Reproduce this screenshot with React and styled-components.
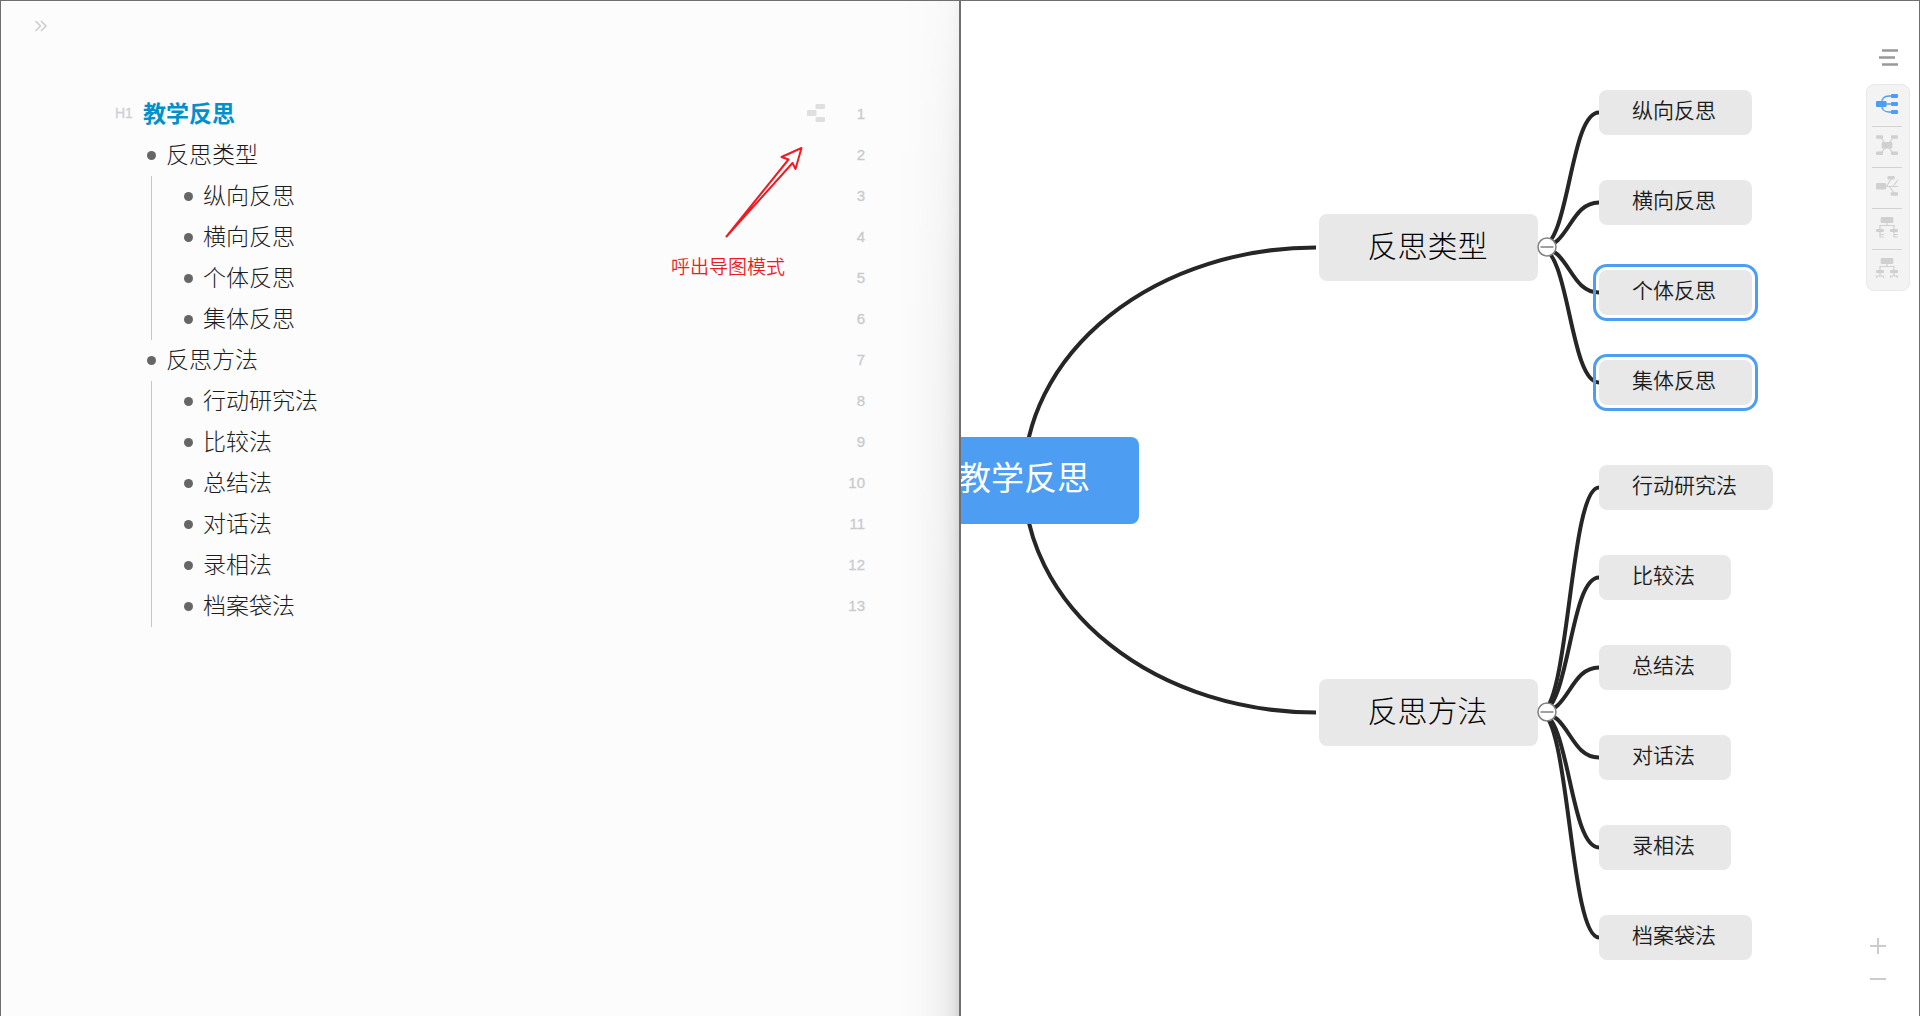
import React from "react";
import styled, { createGlobalStyle, css } from "styled-components";

const GlobalStyle = createGlobalStyle`
  * { box-sizing: border-box; }
  body {
    margin: 0;
    background: #ffffff;
    font-family: "Liberation Sans", "Noto Sans CJK SC", sans-serif;
    color: #333333;
  }
  button { padding: 0; border: 0; background: none; cursor: pointer; font: inherit; }
  svg { display: block; }
`;

const Screen = styled.div`
  display: grid;
  grid-template-columns: 1fr 1fr;
  min-height: 100vh;
`;

const Pane = styled.section`
  position: relative;
  overflow: hidden;
  border: 1px solid #6f6f71;
  border-bottom: 0;
`;

const OutlinePane = styled(Pane)`
  background: #fcfcfc;
`;

const MapPane = styled(Pane)`
  background: #ffffff;
`;

const EdgeShade = styled.div`
  position: absolute;
  top: 0;
  right: 0;
  bottom: 0;
  width: 60px;
  pointer-events: none;
  background: linear-gradient(
    to left,
    rgba(0, 0, 0, 0.15) 0,
    rgba(0, 0, 0, 0.09) 6px,
    rgba(0, 0, 0, 0.05) 14px,
    rgba(0, 0, 0, 0.03) 24px,
    rgba(0, 0, 0, 0.01) 42px,
    rgba(0, 0, 0, 0) 60px
  );
  mask-image: linear-gradient(to bottom, rgba(0, 0, 0, 0.25), rgba(0, 0, 0, 0.75) 300px, #000 620px);
`;

const PaneHeader = styled.header`
  display: flex;
  align-items: center;
  height: 50px;
  padding-left: 33px;
`;

const Outline = styled.ol`
  list-style: none;
  margin: 0;
  padding: 43px 94px 0 114px;
`;

const Row = styled.li`
  display: flex;
  align-items: center;
  height: 41px;
`;

const LevelTag = styled.span`
  flex: none;
  width: 28px;
  padding-bottom: 4px;
  font-size: 14px;
  -webkit-text-stroke: 0.3px #cfcfd6;
  color: #cfcfd6;
`;

const Slot = styled.span`
  display: flex;
  flex: none;
  align-items: center;
  align-self: stretch;
  justify-content: center;
  width: 17px;
`;

const Guide = styled.span`
  align-self: stretch;
  width: 1px;
  background: #c6c6c6;
`;

const GuideSlot = styled(Slot)`
  margin-right: 20px;
`;

const Dot = styled.span`
  width: 9px;
  height: 9px;
  border-radius: 50%;
  background: #666666;
`;

const RowText = styled.span`
  flex: 1;
  font-size: 23px;
  line-height: 41px;
  font-weight: 300;
  padding-left: 6px;
  color: #1c1c1c;
  white-space: nowrap;
`;

const Heading = styled.h1`
  flex: 1;
  margin: 0;
  font-size: 23px;
  line-height: 41px;
  font-weight: 700;
  color: #0090cc;
`;

const MapModeButton = styled.button`
  padding-bottom: 3px;
`;

const LineNumber = styled.span`
  flex: none;
  width: 40px;
  padding-bottom: 2px;
  text-align: right;
  font-size: 15px;
  -webkit-text-stroke: 0.3px #c8cad0;
  color: #c8cad0;
`;

const Annotation = styled.figure`
  position: absolute;
  top: 144px;
  right: 150px;
  display: flex;
  flex-direction: column;
  gap: 15px;
  width: 138px;
  margin: 0;
  svg { align-self: flex-end; }
`;

const Caption = styled.figcaption`
  font-size: 19px;
  line-height: 26px;
  font-weight: 350;
  white-space: nowrap;
  color: #ed1c24;
`;

const Links = styled.svg`
  position: absolute;
  inset: 0;
  width: 100%;
  height: 100%;
  fill: none;
  stroke: #262626;
  stroke-width: 4;
`;

const nodeKinds = {
  root: css`
    width: 230px;
    height: 87px;
    font-size: 33px;
    font-weight: 400;
    color: #ffffff;
    background: #4d9ef3;
    padding-bottom: 10px;
  `,
  branch: css`
    width: 219px;
    height: 67px;
    padding: 0 2px 7px 0;
    font-size: 30px;
    font-weight: 300;
    color: #000000;
  `,
  leaf: css`
    height: 45px;
    padding: 0 36px 7px 33px;
    font-size: 21px;
    font-weight: 350;
    color: #1c1c1c;
  `,
};

const Node = styled.div`
  position: absolute;
  display: flex;
  align-items: center;
  justify-content: center;
  border-radius: 8px;
  background: #e8e8e8;
  white-space: nowrap;
  ${(p) => nodeKinds[p.$kind]}
  ${(p) => p.$selected && css`
    outline: 3px solid #4d9ef3;
    outline-offset: 3px;
  `}
`;

const Toggle = styled.button`
  position: absolute;
  width: 20px;
  height: 20px;
`;

const Tools = styled.aside`
  position: absolute;
  top: 46px;
  right: 9px;
  display: flex;
  flex-direction: column;
  align-items: center;
  gap: 17px;
  width: 44px;
`;

const LayoutBar = styled.div`
  width: 100%;
  padding: 0 7px 0 5px;
  border: 1px solid #e9e9e9;
  border-radius: 8px;
  background: #f3f3f3;
`;

const LayoutButton = styled.button`
  display: flex;
  align-items: center;
  justify-content: center;
  width: 100%;
  height: 41px;
  padding-bottom: 4px;
  color: ${(p) => (p.$active ? "#4d9ef3" : "#d0d0d0")};
  & + & { border-top: 1px solid #d2d2d2; }
`;

const Zoom = styled.div`
  position: absolute;
  right: 32px;
  bottom: 28px;
  display: flex;
  flex-direction: column;
  gap: 15px;
`;

const ZoomButton = styled.button`
  width: 18px;
  height: 18px;
`;

const branches = [
  {
    text: "反思类型",
    top: 213,
    leaves: [
      { text: "纵向反思", top: 89 },
      { text: "横向反思", top: 179 },
      { text: "个体反思", top: 269, selected: true },
      { text: "集体反思", top: 359, selected: true },
    ],
  },
  {
    text: "反思方法",
    top: 678,
    leaves: [
      { text: "行动研究法", top: 464 },
      { text: "比较法", top: 554 },
      { text: "总结法", top: 644 },
      { text: "对话法", top: 734 },
      { text: "录相法", top: 824 },
      { text: "档案袋法", top: 914 },
    ],
  },
];

const rows = branches.flatMap((b) => [
  { text: b.text, level: 1 },
  ...b.leaves.map((l) => ({ text: l.text, level: 2 })),
]);

const ROOT = { left: -52, top: 436, x: 63, y: 479 };
const BRANCH_X = 358;
const LEAF_X = 638;
const TOGGLE_X = 586;

const layouts = [
  {
    name: "逻辑图",
    art: (
      <>
        <path d="M16 4h-2C9.500 4 6.500 6 6.500 12S9.500 20 14 20h2M11 12h5" fill="none" stroke="currentColor" strokeWidth="1.300" />
        <rect x="1" y="9" width="10.500" height="6" rx="1" />
        <rect x="16" y="2" width="7" height="4" rx="1" />
        <rect x="16" y="10" width="7" height="4" rx="1" />
        <rect x="16" y="18" width="7" height="4" rx="1" />
      </>
    ),
  },
  {
    name: "思维导图",
    art: (
      <>
        <path d="M6 5l12 15M18 5L6 20" fill="none" stroke="currentColor" strokeWidth="1.200" />
        <rect x="6.700" y="9" width="10.600" height="6.500" rx="1" />
        <rect x="1" y="2.300" width="7" height="3.500" rx="1" />
        <rect x="16" y="2.300" width="7" height="3.500" rx="1" />
        <rect x="1" y="18.400" width="7" height="3.500" rx="1" />
        <rect x="16" y="18.400" width="7" height="3.500" rx="1" />
      </>
    ),
  },
  {
    name: "鱼骨图",
    art: (
      <>
        <path d="M10 12.500h13M11.500 12.500L16 5M18 12.500L22.800 6M14.500 12.500L19 19" fill="none" stroke="currentColor" strokeWidth="1.200" />
        <rect x="1" y="9" width="10" height="6.500" rx="1" />
        <rect x="12.400" y="2" width="7.300" height="3.500" rx="1" />
        <rect x="15.700" y="18.200" width="7.300" height="3.500" rx="1" />
      </>
    ),
  },
  {
    name: "目录组织图",
    art: (
      <>
        <path d="M12 7v3.500M5 14v-3.500h14V14M5 16v6h4M5 19.500h4M19 16v6h4M19 19.500h4" fill="none" stroke="currentColor" strokeWidth="1.200" />
        <rect x="5.700" y="2" width="12.600" height="6" rx="1" />
        <rect x="1" y="14" width="8" height="3" rx="1" />
        <rect x="15" y="14" width="8" height="3" rx="1" />
      </>
    ),
  },
  {
    name: "组织结构图",
    art: (
      <>
        <path d="M12 7v3.500M5 14v-3.500h14V14M5 16v4M1.600 22v-2h6.800v2M19 16v4M15.600 22v-2h6.800v2" fill="none" stroke="currentColor" strokeWidth="1.200" />
        <rect x="5.700" y="2" width="12.600" height="6" rx="1" />
        <rect x="1" y="14" width="8" height="3" rx="1" />
        <rect x="15" y="14" width="8" height="3" rx="1" />
      </>
    ),
  },
];

function MapModeIcon() {
  return (
    <svg width="18" height="18" fill="#dfdfdf">
      <rect x="0" y="6" width="9.500" height="6" rx="1" />
      <rect x="8.500" y="0" width="9.500" height="5" rx="1" />
      <rect x="8.500" y="13" width="9.500" height="5" rx="1" />
    </svg>
  );
}

function OutlineView() {
  return (
    <OutlinePane>
      <PaneHeader>
        <button type="button" aria-label="展开侧栏">
          <svg width="14" height="12" fill="none" stroke="#cccccc" strokeWidth="1.500">
            <path d="M1.500 1l5 5-5 5M7 1l5 5-5 5" />
          </svg>
        </button>
      </PaneHeader>
      <Outline>
        <Row>
          <LevelTag>H1</LevelTag>
          <Heading>教学反思</Heading>
          <MapModeButton type="button" aria-label="导图模式"><MapModeIcon /></MapModeButton>
          <LineNumber>1</LineNumber>
        </Row>
        {rows.map((row, i) => (
          <Row key={row.text}>
            <LevelTag />
            {row.level === 2 && <GuideSlot><Guide /></GuideSlot>}
            <Slot><Dot /></Slot>
            <RowText>{row.text}</RowText>
            <LineNumber>{i + 2}</LineNumber>
          </Row>
        ))}
      </Outline>
      <Annotation>
        <svg width="84" height="95" fill="none" stroke="#ed1c24" strokeWidth="2" strokeLinejoin="round">
          <path d="M1.500 91.500L63.500 14.500 56.500 12 76.500 3 70.500 24 67.500 18Z" />
        </svg>
        <Caption>呼出导图模式</Caption>
      </Annotation>
      <EdgeShade />
    </OutlinePane>
  );
}

function BranchLinks({ branch }) {
  const y = branch.top + 33.5;
  const x = TOGGLE_X - 7;
  const mid = (x + LEAF_X) / 2;
  return (
    <>
      <path d={`M${ROOT.x} ${ROOT.y}A292 ${Math.abs(ROOT.y - y)} 0 0 ${y < ROOT.y ? 1 : 0} 355 ${y}`} />
      {branch.leaves.map((leaf) => {
        const end = leaf.top + 22.5;
        return <path key={leaf.text} d={`M${x} ${y}C${mid} ${y} ${mid} ${end} ${LEAF_X} ${end}`} />;
      })}
    </>
  );
}

function MindMap() {
  return (
    <MapPane>
      <Links>
        {branches.map((b) => <BranchLinks key={b.text} branch={b} />)}
      </Links>
      <Node $kind="root" style={{ left: ROOT.left, top: ROOT.top }}>教学反思</Node>
      {branches.map((b) => (
        <React.Fragment key={b.text}>
          <Node $kind="branch" style={{ left: BRANCH_X, top: b.top }}>{b.text}</Node>
          <Toggle type="button" aria-label={`收起${b.text}`} style={{ left: TOGGLE_X - 10, top: b.top + 23 }}>
            <svg width="20" height="20" stroke="#808080" fill="#ffffff">
              <circle cx="10" cy="10" r="9" strokeWidth="1.500" />
              <path d="M3.500 10h13" strokeWidth="1.500" />
            </svg>
          </Toggle>
          {b.leaves.map((l) => (
            <Node key={l.text} $kind="leaf" $selected={l.selected} style={{ left: LEAF_X, top: l.top }}>
              {l.text}
            </Node>
          ))}
        </React.Fragment>
      ))}
      <Tools>
        <button type="button" aria-label="菜单">
          <svg width="20" height="20" stroke="#999999" strokeWidth="2.500">
            <path d="M4 3.500h16M1 10.500h16M4 17.500h16" />
          </svg>
        </button>
        <LayoutBar>
          {layouts.map((l, i) => (
            <LayoutButton key={l.name} type="button" aria-label={l.name} aria-pressed={i === 0} $active={i === 0}>
              <svg width="24" height="24" fill="currentColor">{l.art}</svg>
            </LayoutButton>
          ))}
        </LayoutBar>
      </Tools>
      <Zoom>
        <ZoomButton type="button" aria-label="放大">
          <svg width="18" height="18" stroke="#cccccc" strokeWidth="2"><path d="M1 9h16M9 1v16" /></svg>
        </ZoomButton>
        <ZoomButton type="button" aria-label="缩小">
          <svg width="18" height="18" stroke="#cccccc" strokeWidth="2"><path d="M1 9h16" /></svg>
        </ZoomButton>
      </Zoom>
    </MapPane>
  );
}

export default function App() {
  return (
    <>
      <GlobalStyle />
      <Screen>
        <OutlineView />
        <MindMap />
      </Screen>
    </>
  );
}
